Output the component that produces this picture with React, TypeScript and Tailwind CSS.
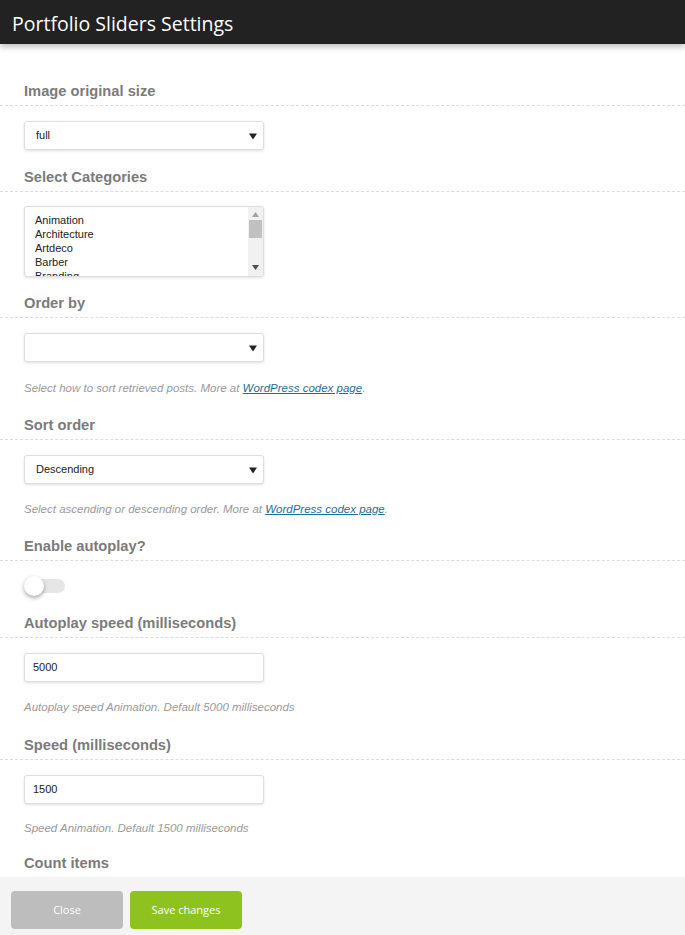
import React from "react";

const arial = { fontFamily: '"Liberation Sans", Arial, sans-serif' };

function Label({ children }: { children: React.ReactNode }) {
    return (
        <div className="border-b border-dashed border-[#dcdcdc] px-6 pb-[6px] text-[14.7px] font-bold leading-[16px] text-[#7b7b7b]">
            {children}
        </div>
    );
}

function Caret() {
    return (
        <svg width="8" height="7" viewBox="0 0 8 7" className="absolute right-[6px] top-[11px]">
            <path d="M0 0.5h8L4 6.5z" fill="#222" />
        </svg>
    );
}

function SelectBox({ value }: { value: string }) {
    return (
        <div className="relative mx-6 h-[29px] w-[240px] rounded-[3px] border border-[#dedede] bg-white pl-[11px] text-[11px] leading-[27px] text-[#222] shadow-[0_1px_3px_rgba(0,0,0,0.12)]">
            {value}
            <Caret />
        </div>
    );
}

function TextBox({ value }: { value: string }) {
    return (
        <div className="mx-6 h-[29px] w-[240px] rounded-[3px] border border-[#dedede] bg-white pl-[8px] text-[11px] leading-[27px] text-[#222] shadow-[0_1px_3px_rgba(0,0,0,0.12)]">
            {value}
        </div>
    );
}

function Help({ children, tight }: { children: React.ReactNode; tight?: boolean }) {
    return (
        <div
            className={
                (tight ? "mt-[17px]" : "mt-[18.5px]") +
                " px-6 text-[11.5px] italic leading-[14px] text-[#9a9a9a]"
            }
        >
            {children}
        </div>
    );
}

function Codex() {
    return <span className="text-[#1e6f95] underline">WordPress codex page</span>;
}

export default function App() {
    const cats = ["Animation", "Architecture", "Artdeco", "Barber", "Branding"];

    return (
        <div className="flex h-[935px] w-[685px] flex-col overflow-hidden bg-white" style={arial}>
            {/* Header */}
            <div
                className="relative z-10 flex h-[44px] shrink-0 items-center bg-[#222222] pl-3 pt-[4px] text-[19.5px] text-white shadow-[0_3px_6px_rgba(0,0,0,0.25)]"
                style={{ fontFamily: '"Open Sans", sans-serif' }}
            >
                Portfolio Sliders Settings
            </div>

            {/* Body */}
            <div className="flex-1 overflow-hidden pt-[39px]">
                <Label>Image original size</Label>
                <div className="mt-[15px]">
                    <SelectBox value="full" />
                </div>

                <div className="mt-[19px]">
                    <Label>Select Categories</Label>
                </div>
                <div className="mx-6 mt-[14px] flex h-[71px] w-[240px] overflow-hidden rounded-[3px] border border-[#dedede] bg-white shadow-[0_1px_3px_rgba(0,0,0,0.12)]">
                    <div className="flex-1 pl-[10px] pt-[6px] text-[11px] leading-[14px] text-[#222]">
                        {cats.map((c) => (
                            <div key={c}>{c}</div>
                        ))}
                    </div>
                    <div className="flex w-[15px] flex-col items-center bg-[#f1f1f1]">
                        <svg width="7" height="5" viewBox="0 0 7 5" className="mt-[5px]">
                            <path d="M3.5 0L7 5H0z" fill="#a3a3a3" />
                        </svg>
                        <div className="mt-[3px] h-[18px] w-[13px] bg-[#c1c1c1]" />
                        <div className="flex-1" />
                        <svg width="7" height="5" viewBox="0 0 7 5" className="mb-[6px]">
                            <path d="M0 0h7L3.5 5z" fill="#505050" />
                        </svg>
                    </div>
                </div>

                <div className="mt-[18px]">
                    <Label>Order by</Label>
                </div>
                <div className="mt-[15px]">
                    <SelectBox value="" />
                </div>
                <Help>
                    Select how to sort retrieved posts. More at <Codex />.
                </Help>

                <div className="mt-[22px]">
                    <Label>Sort order</Label>
                </div>
                <div className="mt-[15px]">
                    <SelectBox value="Descending" />
                </div>
                <Help>
                    Select ascending or descending order. More at <Codex />.
                </Help>

                <div className="mt-[21.5px]">
                    <Label>Enable autoplay?</Label>
                </div>
                <div className="mx-6 mt-[15px] flex h-[20px] items-center">
                    <div className="relative h-[20px] w-[42px]">
                        <div className="absolute left-[8px] top-[3px] h-[14px] w-[33px] rounded-full bg-[#e6e6e6]" />
                        <div className="absolute left-0 top-0 h-[20px] w-[20px] rounded-full bg-white shadow-[0_2px_4px_rgba(0,0,0,0.35)]" />
                    </div>
                </div>

                <div className="mt-[19px]">
                    <Label>Autoplay speed (milliseconds)</Label>
                </div>
                <div className="mt-[15px]">
                    <TextBox value="5000" />
                </div>
                <Help>Autoplay speed Animation. Default 5000 milliseconds</Help>

                <div className="mt-[22.5px]">
                    <Label>Speed (milliseconds)</Label>
                </div>
                <div className="mt-[15px]">
                    <TextBox value="1500" />
                </div>
                <Help tight>Speed Animation. Default 1500 milliseconds</Help>

                <div className="mt-[20px]">
                    <Label>Count items</Label>
                </div>
                <div className="mt-[15px]">
                    <TextBox value="" />
                </div>
            </div>

            {/* Footer */}
            <div
                className="flex h-[58px] shrink-0 items-start gap-[7px] bg-[#f4f4f4] pl-[11px] pt-[14px]"
                style={{ fontFamily: '"Open Sans", sans-serif' }}
            >
                <button className="h-[38px] w-[112px] rounded-[4px] bg-[#bdbdbd] text-[11px] text-white">
                    Close
                </button>
                <button className="h-[38px] w-[112px] rounded-[4px] bg-[#8dc21f] text-[11px] text-white">
                    Save changes
                </button>
            </div>
        </div>
    );
}
